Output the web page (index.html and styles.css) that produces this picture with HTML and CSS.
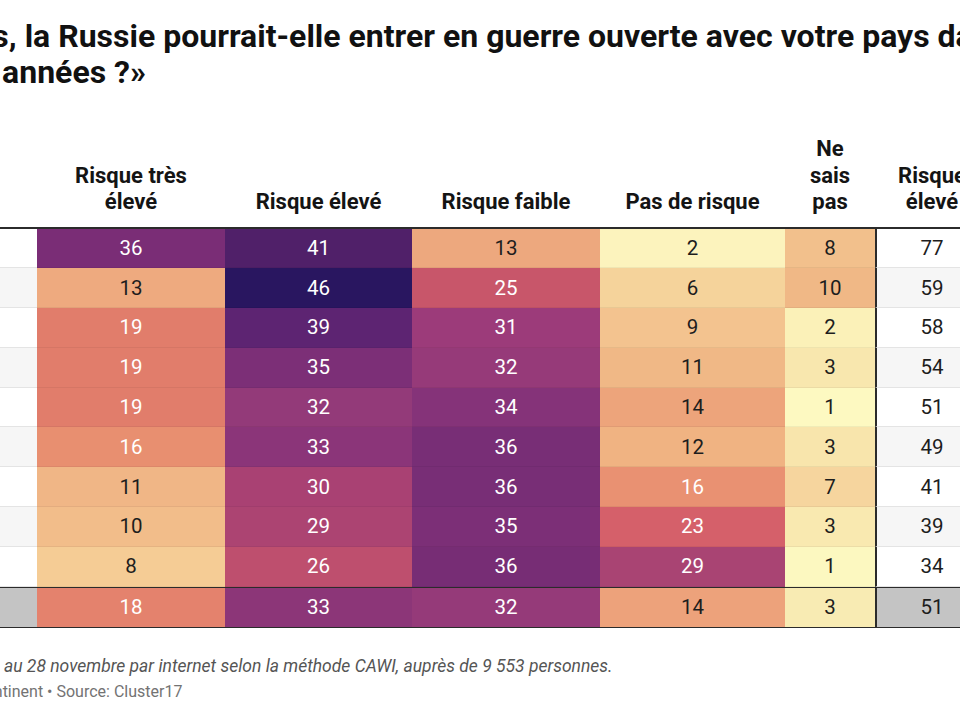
FILE: index.html
```html
<!DOCTYPE html>
<html lang="fr">
<head>
<meta charset="utf-8">
<title>Risque de guerre avec la Russie</title>
<link rel="stylesheet" href="styles.css">
</head>
<body>
<div class="page">
  <h1 class="title">«Selon vous, la Russie pourrait-elle entrer en guerre ouverte avec votre pays dans les<br>prochaines années ?»</h1>

  <div class="table">
    <div class="row head">
      <div class="c label"></div>
      <div class="c">Risque très<br>élevé</div>
      <div class="c">Risque élevé</div>
      <div class="c">Risque faible</div>
      <div class="c">Pas de risque</div>
      <div class="c">Ne<br>sais<br>pas</div>
      <div class="c sum">Risque<br>élevé</div>
    </div>

    <div class="row">
      <div class="c label">Pologne</div>
      <div class="c v light" style="background:#7a2d76">36</div>
      <div class="c v light" style="background:#502069">41</div>
      <div class="c v" style="background:#eda87e">13</div>
      <div class="c v" style="background:#fcf3bd">2</div>
      <div class="c v" style="background:#f2c08c">8</div>
      <div class="c sum">77</div>
    </div>
    <div class="row alt">
      <div class="c label">Danemark</div>
      <div class="c v" style="background:#eeaa7f">13</div>
      <div class="c v light" style="background:#291660">46</div>
      <div class="c v light" style="background:#c8566a">25</div>
      <div class="c v" style="background:#f5d39b">6</div>
      <div class="c v" style="background:#f0b886">10</div>
      <div class="c sum">59</div>
    </div>
    <div class="row">
      <div class="c label">Belgique</div>
      <div class="c v light" style="background:#e17d6b">19</div>
      <div class="c v light" style="background:#5d2472">39</div>
      <div class="c v light" style="background:#9c3b7a">31</div>
      <div class="c v" style="background:#f3c38f">9</div>
      <div class="c v" style="background:#fbf1b8">2</div>
      <div class="c sum">58</div>
    </div>
    <div class="row alt">
      <div class="c label">France</div>
      <div class="c v light" style="background:#e17d6b">19</div>
      <div class="c v light" style="background:#7c2f77">35</div>
      <div class="c v light" style="background:#963a79">32</div>
      <div class="c v" style="background:#f0b886">11</div>
      <div class="c v" style="background:#f8e7ae">3</div>
      <div class="c sum">54</div>
    </div>
    <div class="row">
      <div class="c label">Allemagne</div>
      <div class="c v light" style="background:#e17d6b">19</div>
      <div class="c v light" style="background:#933a79">32</div>
      <div class="c v light" style="background:#853379">34</div>
      <div class="c v" style="background:#eda47b">14</div>
      <div class="c v" style="background:#fdf9c1">1</div>
      <div class="c sum">51</div>
    </div>
    <div class="row alt">
      <div class="c label">Espagne</div>
      <div class="c v light" style="background:#e88f70">16</div>
      <div class="c v light" style="background:#8b3579">33</div>
      <div class="c v light" style="background:#782e76">36</div>
      <div class="c v" style="background:#f0b382">12</div>
      <div class="c v" style="background:#f8e5ac">3</div>
      <div class="c sum">49</div>
    </div>
    <div class="row">
      <div class="c label">Croatie</div>
      <div class="c v" style="background:#f0b686">11</div>
      <div class="c v light" style="background:#a94173">30</div>
      <div class="c v light" style="background:#782e76">36</div>
      <div class="c v light" style="background:#e99172">16</div>
      <div class="c v" style="background:#f6d59e">7</div>
      <div class="c sum">41</div>
    </div>
    <div class="row alt">
      <div class="c label">Portugal</div>
      <div class="c v" style="background:#f2bd8a">10</div>
      <div class="c v light" style="background:#ac4472">29</div>
      <div class="c v light" style="background:#7c2f77">35</div>
      <div class="c v light" style="background:#d5606a">23</div>
      <div class="c v" style="background:#f9e9b0">3</div>
      <div class="c sum">39</div>
    </div>
    <div class="row">
      <div class="c label">Italie</div>
      <div class="c v" style="background:#f5cc95">8</div>
      <div class="c v light" style="background:#be4f6e">26</div>
      <div class="c v light" style="background:#772d75">36</div>
      <div class="c v light" style="background:#a94473">29</div>
      <div class="c v" style="background:#fcf8c0">1</div>
      <div class="c sum">34</div>
    </div>
    <div class="row total">
      <div class="c label">Total</div>
      <div class="c v light" style="background:#e4826d">18</div>
      <div class="c v light" style="background:#8c3678">33</div>
      <div class="c v light" style="background:#953a79">32</div>
      <div class="c v" style="background:#eda27b">14</div>
      <div class="c v" style="background:#f8ebb3">3</div>
      <div class="c sum">51</div>
    </div>
  </div>

  <p class="note">Sondage réalisé du 4 au 28 novembre par internet selon la méthode CAWI, auprès de 9 553 personnes.</p>
  <p class="credit">Graphique: Le Grand Continent • Source: Cluster17</p>
</div>
</body>
</html>
```

FILE: styles.css
```css
html, body {
  margin: 0;
  padding: 0;
  background: #ffffff;
  overflow: hidden;
}

body {
  font-family: Roboto, "Liberation Sans", sans-serif;
  color: #1d1d1d;
}

.page {
  margin-left: -158px;
  width: 1320px;
}

.title {
  margin: 18px 0 0 -7px;
  font-size: 32px;
  line-height: 36px;
  font-weight: 700;
  color: #111111;
  white-space: nowrap;
}

.table {
  margin-top: 46px;
  display: flex;
  flex-direction: column;
}

.row {
  display: grid;
  grid-template-columns: 195px 188px 187px 188px 185px 90px 112px;
  height: 39.8px;
}

.c {
  display: flex;
  align-items: center;
  justify-content: center;
  font-size: 20.5px;
  box-sizing: border-box;
  border-bottom: 1px solid rgba(0, 0, 0, 0.05);
}

.c.label {
  justify-content: flex-start;
  padding-left: 6px;
  border-bottom-color: #e4e4e4;
}

.c.sum {
  border-left: 2px solid #2b2b2b;
  border-bottom-color: #e4e4e4;
}

.alt .label,
.alt .sum {
  background: #f6f6f6;
}

.v.light {
  color: #ffffff;
}

.row.head {
  height: auto;
  border-bottom: 2px solid #2b2b2b;
}

.head .c {
  align-items: flex-end;
  text-align: center;
  font-size: 22px;
  font-weight: 700;
  line-height: 26.5px;
  padding: 0 0 11px 0;
  border-bottom: none;
  color: #141414;
}

.head .c.sum {
  border-left: none;
  padding-left: 2px;
}

.row.total {
  border-top: 1px solid #2b2b2b;
  border-bottom: 1px solid #2b2b2b;
  height: 39px;
}

.total .c {
  border-bottom: none;
}

.total .label,
.total .sum {
  background: #c4c4c4;
}

.note {
  margin: 25px 0 0 0;
  font-size: 17.5px;
  line-height: 26px;
  font-style: italic;
  color: #555555;
  white-space: nowrap;
}

.credit {
  margin: 0 0 0 -16px;
  font-size: 16px;
  line-height: 26px;
  color: #737373;
  white-space: nowrap;
}
```
